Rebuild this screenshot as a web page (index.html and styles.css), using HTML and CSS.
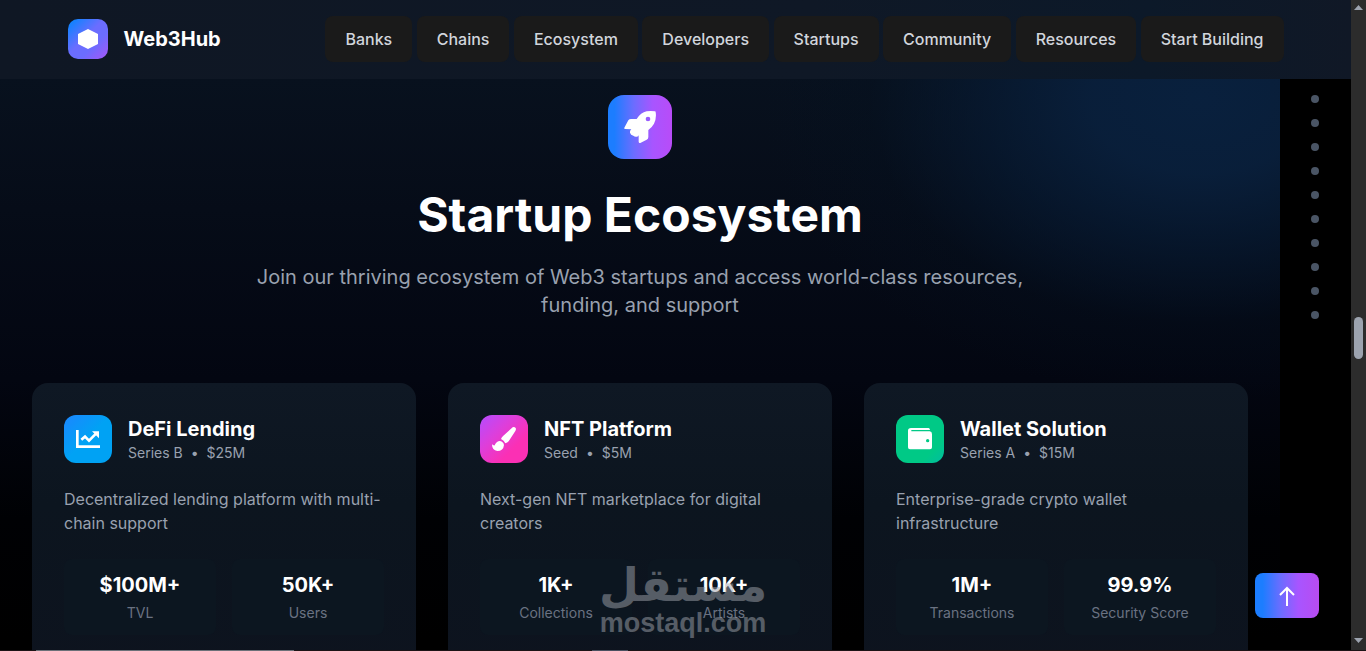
FILE: index.html
```html
<!DOCTYPE html>
<html lang="en">
<head>
    <meta charset="UTF-8">
    <meta name="viewport" content="width=device-width, initial-scale=1.0">
    <title>Web3Hub</title>
    <link rel="stylesheet" href="styles.css">
</head>
<body>
    <div class="page">
        <header class="header">
            <div class="header-inner">
                <a href="#" class="logo">
                    <span class="logo-mark">
                        <svg width="20" height="20" viewBox="0 0 20 20"><path d="M10 0l10 5v10l-10 5L0 15V5z" fill="#fff"/></svg>
                    </span>
                    <span>Web3Hub</span>
                </a>
                <nav class="nav">
                    <button type="button">Banks</button>
                    <button type="button">Chains</button>
                    <button type="button">Ecosystem</button>
                    <button type="button">Developers</button>
                    <button type="button">Startups</button>
                    <button type="button">Community</button>
                    <button type="button">Resources</button>
                    <button type="button">Start Building</button>
                </nav>
            </div>
        </header>

        <main class="startups">
            <div class="section-icon">
                <svg width="32" height="32" viewBox="0 0 96 96"><path fill="#fff" fill-rule="evenodd" d="M1 50L13 28Q16 24 21 24H38Q50 5 68 1Q80-1 93 1Q95 1 95 4Q98 22 90 38Q84 49 73 57V78Q73 84 68 86L49 96Q45 97 44 92V72Q44 77 38 77Q32 78 28 74Q20 72 18 65Q17 59 22 55L3 54Q0 53 1 50zM72 17a7 7 0 1 0 0 14a7 7 0 1 0 0-14z"/></svg>
            </div>
            <h1>Startup Ecosystem</h1>
            <p class="lead">Join our thriving ecosystem of Web3 startups and access world-class resources, funding, and support</p>

            <div class="cards">
                <article class="card">
                    <div class="card-head">
                        <div class="card-icon blue">
                            <svg width="24" height="24" viewBox="0 0 72 72" fill="none" stroke="#fff"><path d="M4 9V59H72" stroke-width="8"/><path d="M16 38L27 29L39 41L60 20" stroke-width="8"/><path d="M48 13H69V34z" fill="#fff" stroke="none"/></svg>
                        </div>
                        <div>
                            <h2>DeFi Lending</h2>
                            <p class="meta"><span>Series B</span><span>•</span><span>$25M</span></p>
                        </div>
                    </div>
                    <p class="desc">Decentralized lending platform with multi-chain support</p>
                    <div class="stats">
                        <div class="stat"><strong>$100M+</strong><span>TVL</span></div>
                        <div class="stat"><strong>50K+</strong><span>Users</span></div>
                    </div>
                </article>
                <article class="card">
                    <div class="card-head">
                        <div class="card-icon pink">
                            <svg width="24" height="24" viewBox="0 0 72 72" fill="#fff"><path d="M62 1Q67-1 71 3Q73 7 70 12L50 43Q46 48 40 49Q36 40 27 36Q29 30 34 26z"/><path d="M22 42Q34 43 36 54Q34 72 16 72Q0 70 0 52Q4 56 8 55Q12 44 22 42z"/></svg>
                        </div>
                        <div>
                            <h2>NFT Platform</h2>
                            <p class="meta"><span>Seed</span><span>•</span><span>$5M</span></p>
                        </div>
                    </div>
                    <p class="desc">Next-gen NFT marketplace for digital creators</p>
                    <div class="stats">
                        <div class="stat"><strong>1K+</strong><span>Collections</span></div>
                        <div class="stat"><strong>10K+</strong><span>Artists</span></div>
                    </div>
                </article>
                <article class="card">
                    <div class="card-head">
                        <div class="card-icon green">
                            <svg width="24" height="24" viewBox="0 0 72 72" fill="#fff" fill-rule="evenodd"><path d="M9 3H62Q66 4 66 9H10V13H65Q72 14 72 21V61Q72 67 66 67H6Q0 67 0 61V11Q0 4 9 3zM59 36a5 5 0 1 0 0 10a5 5 0 1 0 0-10z"/></svg>
                        </div>
                        <div>
                            <h2>Wallet Solution</h2>
                            <p class="meta"><span>Series A</span><span>•</span><span>$15M</span></p>
                        </div>
                    </div>
                    <p class="desc">Enterprise-grade crypto wallet infrastructure</p>
                    <div class="stats">
                        <div class="stat"><strong>1M+</strong><span>Transactions</span></div>
                        <div class="stat"><strong>99.9%</strong><span>Security Score</span></div>
                    </div>
                </article>
            </div>
        </main>

        <nav class="dots" aria-label="Sections">
            <button type="button" aria-label="Section 1"></button>
            <button type="button" aria-label="Section 2"></button>
            <button type="button" aria-label="Section 3"></button>
            <button type="button" aria-label="Section 4"></button>
            <button type="button" aria-label="Section 5"></button>
            <button type="button" aria-label="Section 6"></button>
            <button type="button" aria-label="Section 7"></button>
            <button type="button" aria-label="Section 8"></button>
            <button type="button" aria-label="Section 9"></button>
            <button type="button" aria-label="Section 10"></button>
        </nav>

        <button type="button" class="to-top" aria-label="Back to top">
            <svg width="16" height="20" viewBox="0 0 16 20" fill="none" stroke="#fff" stroke-width="2"><path d="M8 20V2M1 9L8 2L15 9"/></svg>
        </button>
    </div>

    <div class="scrollbar">
        <svg width="9" height="5" viewBox="0 0 9 5"><path d="M4.500 0L9 5H0z" fill="#9ca3af"/></svg>
        <div class="thumb"></div>
        <svg width="9" height="5" viewBox="0 0 9 5"><path d="M0 0H9L4.500 5z" fill="#9ca3af"/></svg>
    </div>

    <div class="watermark">
        <span class="watermark-ar" lang="ar" dir="rtl">مستقل</span>
        <span class="watermark-en">mostaql.com</span>
    </div>
    <div class="edge"></div>
</body>
</html>
```
FILE: styles.css
```css
* {
    box-sizing: border-box;
    margin: 0;
    padding: 0;
}
body {
    position: relative;
    display: flex;
    height: 100vh;
    overflow: hidden;
    background: #000;
    color: #fff;
    font-family: Inter, "Liberation Sans", sans-serif;
    font-size: 16px;
    line-height: 24px;
}
button {
    border: none;
    font: inherit;
    cursor: pointer;
}
.page {
    position: relative;
    display: flex;
    flex-direction: column;
    flex: 1;
    min-width: 0;
    height: 100vh;
}

/* header */
.header {
    background: linear-gradient(90deg, #0f1724 0%, #0f1826 60%, #0c1929 85%, #101826 100%);
}
.header-inner {
    display: flex;
    justify-content: space-between;
    align-items: center;
    max-width: 1280px;
    margin: 0 auto;
    padding: 16px 32px 17px;
}
.logo {
    display: flex;
    align-items: center;
    gap: 16px;
    color: #fff;
    font-size: 20px;
    font-weight: 700;
    text-decoration: none;
}
.logo-mark {
    display: flex;
    align-items: center;
    justify-content: center;
    width: 40px;
    height: 40px;
    border-radius: 10px;
    background: linear-gradient(135deg, #1681ff 10%, #6b6dff 45%, #6b6dff 65%, #a855f7 100%);
}
.nav button {
    padding: 11px 20px;
    border-radius: 8px;
    background: #1a1a1a;
    color: #d1d5dc;
    font-weight: 500;
}

/* startup section */
.startups {
    flex: 1;
    width: 100%;
    max-width: 1280px;
    min-height: 0;
    overflow: hidden;
    padding: 16px 32px 0;
    background:
        radial-gradient(ellipse 440px 300px at 1200px 20px, rgba(9, 33, 63, 0.95) 0%, rgba(9, 32, 61, 0.9) 25%, rgba(7, 28, 54, 0.6) 50%, rgba(4, 18, 34, 0.25) 75%, rgba(4, 16, 34, 0) 100%),
        linear-gradient(180deg, #08111e 0, #060c18 130px, #030611 300px, #000104 440px, #000 560px);
}
.section-icon {
    display: flex;
    align-items: center;
    justify-content: center;
    width: 64px;
    height: 64px;
    margin: 0 auto 32px;
    border-radius: 16px;
    background: linear-gradient(90deg, #1c7dff 10%, #6b6dff 40%, #a855ff 70%, #b84cf8 100%);
}
h1 {
    margin-bottom: 24px;
    font-size: 48px;
    line-height: 48px;
    font-weight: 700;
    text-align: center;
}
.lead {
    max-width: 768px;
    margin: 0 auto 64px;
    color: #99a1af;
    font-size: 20px;
    line-height: 28px;
    text-align: center;
}
.cards {
    display: grid;
    grid-template-columns: repeat(3, 1fr);
    gap: 32px;
}
.card {
    padding: 32px;
    border-radius: 16px;
    background: linear-gradient(180deg, #0f1824 0, #0c151f 120px, #0d131e 300px);
}
.card-head {
    display: flex;
    align-items: center;
    gap: 16px;
    margin-bottom: 24px;
}
.card-icon {
    display: flex;
    align-items: center;
    justify-content: center;
    width: 48px;
    height: 48px;
    border-radius: 12px;
}
.blue {
    background: linear-gradient(135deg, #1c86ff 0%, #00a2f4 50%);
}
.pink {
    background: linear-gradient(135deg, #b44cff 0%, #dc3fdc 35%, #fb30b4 70%);
}
.green {
    background: linear-gradient(135deg, #00c986 75%, #00bea0 100%);
}
h2 {
    font-size: 20px;
    line-height: 28px;
    font-weight: 700;
}
.meta {
    display: flex;
    gap: 8px;
    color: #99a1af;
    font-size: 14px;
    line-height: 20px;
}
.desc {
    margin-bottom: 24px;
    color: #99a1af;
}
.stats {
    display: grid;
    grid-template-columns: 1fr 1fr;
    gap: 16px;
}
.stat {
    display: flex;
    flex-direction: column;
    gap: 4px;
    padding: 12px;
    border-radius: 8px;
    background: #0c1620;
    text-align: center;
}
.stat strong {
    font-size: 20px;
    line-height: 28px;
    font-weight: 700;
}
.stat span {
    color: #6a7282;
    font-size: 14px;
    line-height: 20px;
}

/* floating controls */
.dots {
    position: absolute;
    top: 95px;
    right: 32px;
    display: flex;
    flex-direction: column;
    gap: 16px;
}
.dots button {
    width: 8px;
    height: 8px;
    border-radius: 50%;
    background: #4a5565;
}
.to-top {
    position: absolute;
    right: 32px;
    bottom: 33px;
    display: flex;
    align-items: center;
    justify-content: center;
    width: 64px;
    height: 45px;
    border-radius: 8px;
    background: linear-gradient(90deg, #1c7dff 12%, #6b6dff 40%, #a855ff 68%, #b84cf0 100%);
}

.scrollbar {
    display: flex;
    flex-direction: column;
    align-items: center;
    justify-content: space-between;
    width: 15px;
    height: 100vh;
    padding: 5px 0 8px;
    background: #2c2c2c;
}
.thumb {
    width: 9px;
    height: 42px;
    margin-top: 28px;
    border-radius: 5px;
    background: #9ca3af;
}

.watermark {
    position: absolute;
    left: 50%;
    bottom: 14px;
    display: flex;
    flex-direction: column;
    align-items: center;
    transform: translateX(-50%);
    opacity: 0.5;
    color: #a0a3ac;
    font-weight: 700;
    pointer-events: none;
}
.watermark-ar {
    font-family: "DejaVu Sans", sans-serif;
    font-size: 46px;
    line-height: 48px;
}
.watermark-en {
    font-family: "Liberation Sans", sans-serif;
    font-size: 27px;
    line-height: 28px;
}
.edge {
    position: absolute;
    left: 0;
    right: 0;
    bottom: 0;
    height: 1px;
    background: linear-gradient(90deg, #1b1315 36px, #6b7078 36px, #6b7078 294px, #1b1315 294px, #1b1315 592px, #4a5060 592px, #4a5060 628px, #1b1315 628px);
}
```
